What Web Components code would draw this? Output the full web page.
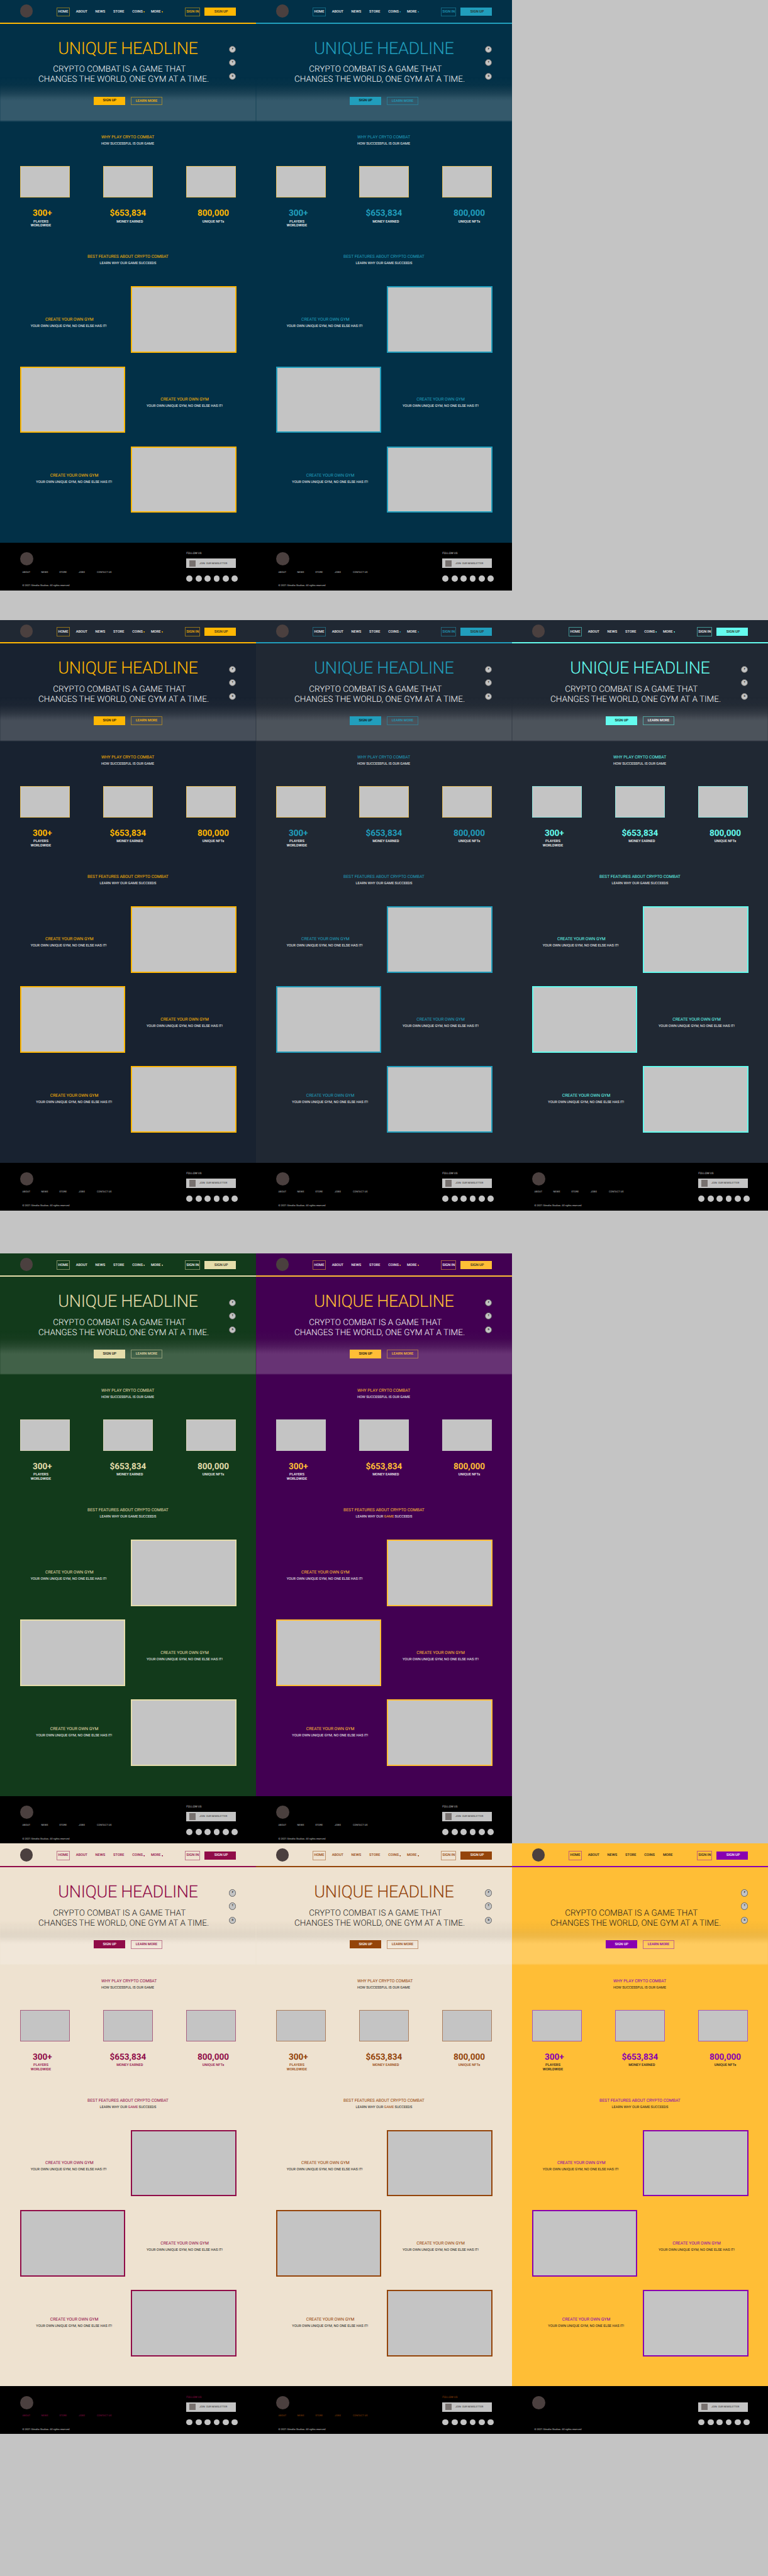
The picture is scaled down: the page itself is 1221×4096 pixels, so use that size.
<!DOCTYPE html>
<html lang="en">
<head>
<meta charset="utf-8">
<title>Crypto Combat themes</title>
<style>
/* 1rem = 10 artboard pixels */
html{font-size:6.875px}
body{margin:0;background:#c4c4c4;font-family:Roboto,"Liberation Sans",sans-serif;height:4096px;overflow:hidden;text-rendering:geometricPrecision}
main{display:flex;flex-direction:column}
theme-row+theme-row{margin-top:var(--gap,0)}
.navy-blue{--bg:#023047;--accent:#219ebc;--stat:#ffb703}
.navy-gold{--bg:#023047;--accent:#ffb703}
.ink-gold{--bg:#182230;--head:#202833;--accent:#ffb703}
.slate-blue{--bg:#202833;--accent:#219ebc;--stat:#ffb703}
.slate-mint{--bg:#202833;--accent:#64fcee;--ghost:#fff}
.green{--bg:#123a1b;--accent:#e5ddab;--signin:#fff}
.purple{--bg:#420052;--accent:#ffbe36;--signin:#fff;--stat:#c4c4c4;--logo:#4a403e;--game:#ffbe36}
.cream-rose{--bg:#eee2d0;--accent:#900c48;--nav:#900c48;--text:#222;--label:#900c48;--btn:#fff;--btnhead:#fff;--foot:#900c48;--game:#900c48}
.cream-rust{--bg:#eee2d0;--accent:#94440a;--nav:#94440a;--text:#222;--label:#94440a;--btn:#fff;--btnhead:#fff;--foot:#94440a;--game:#94440a}
.sun-violet{--bg:#ffbe36;--accent:#8900b0;--nav:#1c1c1c;--text:#1c1c1c;--label:#1c1c1c;--signin:#1c1c1c;--btn:#fff;--btnhead:#fff}
</style>
</head>
<body>
<main>
  <theme-row>
    <landing-page class="navy-gold"></landing-page>
    <landing-page class="navy-blue"></landing-page>
  </theme-row>
  <theme-row style="--gap:6.83rem">
    <landing-page class="ink-gold"></landing-page>
    <landing-page class="slate-blue"></landing-page>
    <landing-page class="slate-mint"></landing-page>
  </theme-row>
  <theme-row style="--gap:9.92rem">
    <landing-page class="green"></landing-page>
    <landing-page class="purple"></landing-page>
  </theme-row>
  <theme-row>
    <landing-page class="cream-rose" why="WHY PLAY CRYPTO COMBAT"></landing-page>
    <landing-page class="cream-rust" why="WHY PLAY CRYPTO COMBAT"></landing-page>
    <landing-page class="sun-violet" bare></landing-page>
  </theme-row>
</main>
<script>
const define = (name, render) => customElements.define(name, class extends HTMLElement {
  connectedCallback() {
    if (this.shadowRoot) return;
    this.attachShadow({ mode: 'open' }).innerHTML = render(this);
  }
});

define('theme-row', () => `<style>:host{display:flex;height:136.55rem}</style><slot></slot>`);

define('logo-dot', () => `<style>:host{display:block;width:3rem;height:3rem;border-radius:50%;background:var(--logo,#4b403f)}</style>`);

define('action-button', el => `<style>
:host{box-sizing:border-box;display:flex;align-items:center;justify-content:center;height:2.1rem;font-size:.822rem;font-weight:500;white-space:nowrap;color:var(--fg);border:1px solid color-mix(in srgb,var(--accent) 50%,transparent)}
:host([solid]){height:1.93rem;background:var(--accent);border:0;color:var(--btn,#0a0a0a)}
</style><slot></slot>`);

define('nav-item', el => `<style>
:host{display:flex;align-items:center;font-size:.822rem;font-weight:500;color:var(--nav,#f2f2f2);white-space:nowrap}
svg{width:.34rem;height:.34rem;margin:.2rem 0 0 .2rem;fill:var(--accent)}
</style><slot></slot>${el.hasAttribute('menu') ? '<svg viewBox="0 0 10 10"><path d="M0 0h10L5 10z"/></svg>' : ''}`);

define('site-header', el => `<style>
:host{box-sizing:border-box;display:grid;grid-template-columns:8.5rem 4.46rem 4.48rem 4.16rem 4.4rem 4.3rem 7.9rem 4.5rem 7.3rem;align-items:center;height:5.47rem;padding:.3rem 0 0 4.6rem;background:var(--head,var(--bg));border-bottom:2px solid var(--accent)}
logo-dot{margin-top:-.3rem}
.home{width:3.02rem;--fg:var(--nav,#f2f2f2)}
.in{width:3.5rem;--fg:var(--signin,var(--ghost,var(--accent)))}
.up{width:7.3rem;padding-left:.4rem;--btn:var(--btnhead,#2b2a20)}
</style>
<logo-dot></logo-dot><action-button class="home">HOME</action-button>
<nav-item>ABOUT</nav-item><nav-item>NEWS</nav-item><nav-item>STORE</nav-item>
<nav-item ${el.hasAttribute('bare') ? '' : 'menu'}>COINS</nav-item><nav-item ${el.hasAttribute('bare') ? '' : 'menu'}>MORE</nav-item>
<action-button class="in">SIGN IN</action-button><action-button class="up" solid>SIGN UP</action-button>`);

define('social-rail', () => `<style>
:host{display:flex;flex-direction:column}
b{box-sizing:border-box;width:1.63rem;height:1.63rem;border-radius:50%;background:#c4c4c4;border:1px solid color-mix(in srgb,#222 60%,#c4c4c4);display:flex;align-items:center;justify-content:center;font-size:.6rem;font-weight:700;color:#222}
b+b{margin-top:1.42rem}b+b+b{margin-top:1.62rem}
</style><b>F</b><b>T</b><b>D</b>`);

define('hero-banner', el => `<style>
:host{display:grid;height:22.73rem}
.copy,.haze,social-rail{grid-area:1/1}
.copy,social-rail{z-index:1}
.haze{margin-top:12.4rem;height:10.3rem;background:linear-gradient(rgba(110,110,110,0),rgba(100,100,100,.05) 1.8rem,rgba(130,130,130,.12) 2.8rem,rgba(165,165,165,.17) 3.8rem,rgba(225,225,225,.19) 4.7rem,rgba(255,255,255,.2) 5.4rem,rgba(255,255,255,.2) 9.9rem,rgba(255,255,255,0));
 mask-image:linear-gradient(90deg,rgba(0,0,0,.6),#000 1.5px,#000 calc(100% - 1.5px),rgba(0,0,0,.6))}
social-rail{justify-self:end;margin:5.13rem 4.6rem 0 0;align-self:start}
.copy{font-weight:300;text-align:center;white-space:nowrap}
h1{height:4.6rem;line-height:4.6rem;margin:3.5rem 0 1.47rem;font-size:3.947rem;font-weight:300;letter-spacing:-.0145em;color:var(--accent)}
p{margin:0;font-size:1.973rem;line-height:2.32rem;color:var(--text,#fafafa)}
.a{padding-right:4rem}.b{padding-right:2rem}
.cta{display:grid;grid-template-columns:8.6rem 7.2rem;padding-left:21.7rem;margin-top:2.68rem}
.cta :first-child{width:7.27rem}
.cta :last-child{height:1.98rem;--fg:var(--ghost,var(--accent))}
</style>
<div class="haze"></div>
<div class="copy"><h1>${el.hasAttribute('bare') ? '' : 'UNIQUE HEADLINE'}</h1>
<p class="a">CRYPTO COMBAT IS A GAME THAT</p><p class="b">CHANGES THE WORLD, ONE GYM AT A TIME.</p>
<div class="cta"><action-button solid>SIGN UP</action-button><action-button>LEARN MORE</action-button></div></div>
<social-rail></social-rail>`);

define('section-title', () => `<style>
:host{display:flex;flex-direction:column;gap:.45rem;white-space:nowrap;color:var(--text,#f4f4f4);font-size:.822rem;line-height:.96rem}
.t{margin-top:.07rem;font-size:.987rem;line-height:1.16rem;color:var(--accent);padding-left:var(--shift,0)}
</style><div class="t"><slot name="title"></slot></div><div><slot></slot></div>`);

define('stat-card', () => `<style>
:host{display:block;width:11.5rem;text-align:center;white-space:nowrap}
.pic{box-sizing:border-box;height:7.23rem;background:#c4c4c4;border:1px solid color-mix(in srgb,var(--stat,var(--accent)) 55%,#c4c4c4)}
.num{margin-top:2.6rem;font-size:1.973rem;line-height:2.3rem;font-weight:700;color:var(--accent);padding:var(--np,0)}
.lab{margin-top:.26rem;font-size:.822rem;line-height:.963rem;font-weight:500;color:var(--label,#f8f8f8);padding:var(--lp,0)}
</style><div class="pic"></div><div class="num"><slot name="value"></slot></div><div class="lab"><slot></slot></div>`);

define('feature-row', () => `<style>
:host{display:flex;height:15.37rem}
.pic{box-sizing:border-box;width:24.35rem;height:15.37rem;background:#c4c4c4;border:2px solid var(--accent)}
.txt{width:25.7rem;padding-top:var(--top,7.12rem);box-sizing:border-box;padding-left:var(--pl)}
:host([flip]) .txt{order:1}
</style><div class="txt"><section-title><span slot="title">CREATE YOUR OWN GYM</span>YOUR OWN UNIQUE GYM, NO ONE ELSE HAS IT!</section-title></div><div class="pic"></div>`);

define('site-footer', el => `<style>
:host{display:grid;grid-template-columns:43.1rem 11.5rem;height:11.05rem;background:#000;color:#c9c9c9;font-size:.575rem;line-height:.66rem;white-space:nowrap}
logo-dot{margin:2.23rem 0 0 4.6rem;width:3.04rem;height:3.04rem}
nav{display:grid;grid-template-columns:4.36rem 4.17rem 4.5rem 4.19rem auto;margin:1.25rem 0 0 5.17rem;height:.66rem;color:var(--foot,#c9c9c9)}
small{display:block;font-size:.575rem;margin:2.49rem 0 0 5.17rem}
.follow{margin-top:2.28rem;font-size:.658rem;line-height:.77rem;height:.77rem;color:var(--foot,#c9c9c9)}
.news{display:flex;align-items:center;margin-top:.68rem;height:2.14rem;background:#c4c4c4;color:#222;padding-left:.72rem;gap:.92rem;white-space:pre}
.news i{width:1.38rem;height:1.47rem;background:#77716f}
.dots{display:flex;gap:.66rem;margin-top:1.73rem}
.dots i{flex:none;width:1.44rem;height:1.44rem;border-radius:50%;background:#c4c4c4}
</style>
<div><logo-dot></logo-dot>
<nav>${el.hasAttribute('bare') ? '' : ['ABOUT', 'NEWS', 'STORE', 'JOBS', 'CONTACT US'].map(t => `<span>${t}</span>`).join('')}</nav>
<small>© 2021 Sitnalta Studios. All rights reserved</small></div>
<div><div class="follow">${el.hasAttribute('bare') ? '' : 'FOLLOW US'}</div>
<div class="news"><i></i><span>JOIN  OUR NEWSLETTER</span></div>
<div class="dots">${'<i></i>'.repeat(6)}</div></div>`);

define('landing-page', el => {
  const bare = el.hasAttribute('bare') ? 'bare' : '';
  return `<style>
:host{display:flex;flex-direction:column;width:59.2rem;height:136.55rem;background:var(--bg)}
.why{margin:3.02rem 0 0 23.4rem}
.stats{display:grid;grid-template-columns:19.23rem 19.23rem 11.5rem;margin:4.62rem 0 0 4.6rem}
.best{margin-top:6.07rem;align-items:center}
.f1{margin:4.72rem 0 0 4.6rem}.f2{margin:3.17rem 0 0 4.6rem}.f3{margin:3.1rem 0 0 4.6rem}
.f1{--pl:2.48rem;--shift:3.4rem}
.f2{--pl:4.95rem;--shift:3.23rem}
.f3{--pl:3.74rem;--shift:3.26rem;--top:6.28rem}
em{font-style:normal;color:var(--game,inherit)}
site-footer{margin-top:auto}
</style>
<site-header ${bare}></site-header>
<hero-banner ${bare}></hero-banner>
<section-title class="why"><span slot="title">${el.getAttribute('why') || 'WHY PLAY CRYTO COMBAT'}</span>HOW SUCCESSFUL IS OUR GAME</section-title>
<div class="stats">
<stat-card style="--np:0 1.1rem 0 0;--lp:0 1.8rem 0 0"><span slot="value">300+</span>PLAYERS<br>WORLDWIDE</stat-card>
<stat-card style="--lp:0 0 0 .84rem"><span slot="value">$653,834</span>MONEY EARNED</stat-card>
<stat-card style="--np:0 0 0 1rem;--lp:0 0 0 1.04rem"><span slot="value">800,000</span>UNIQUE NFTs</stat-card>
</div>
<section-title class="best"><span slot="title">BEST FEATURES ABOUT CRYPTO COMBAT</span><span>LEARN WHY OUR <em>GAME</em> SUCCEEDS</span></section-title>
<feature-row class="f1"></feature-row>
<feature-row class="f2" flip></feature-row>
<feature-row class="f3"></feature-row>
<site-footer ${bare}></site-footer>`;
});
</script>
</body>
</html>
